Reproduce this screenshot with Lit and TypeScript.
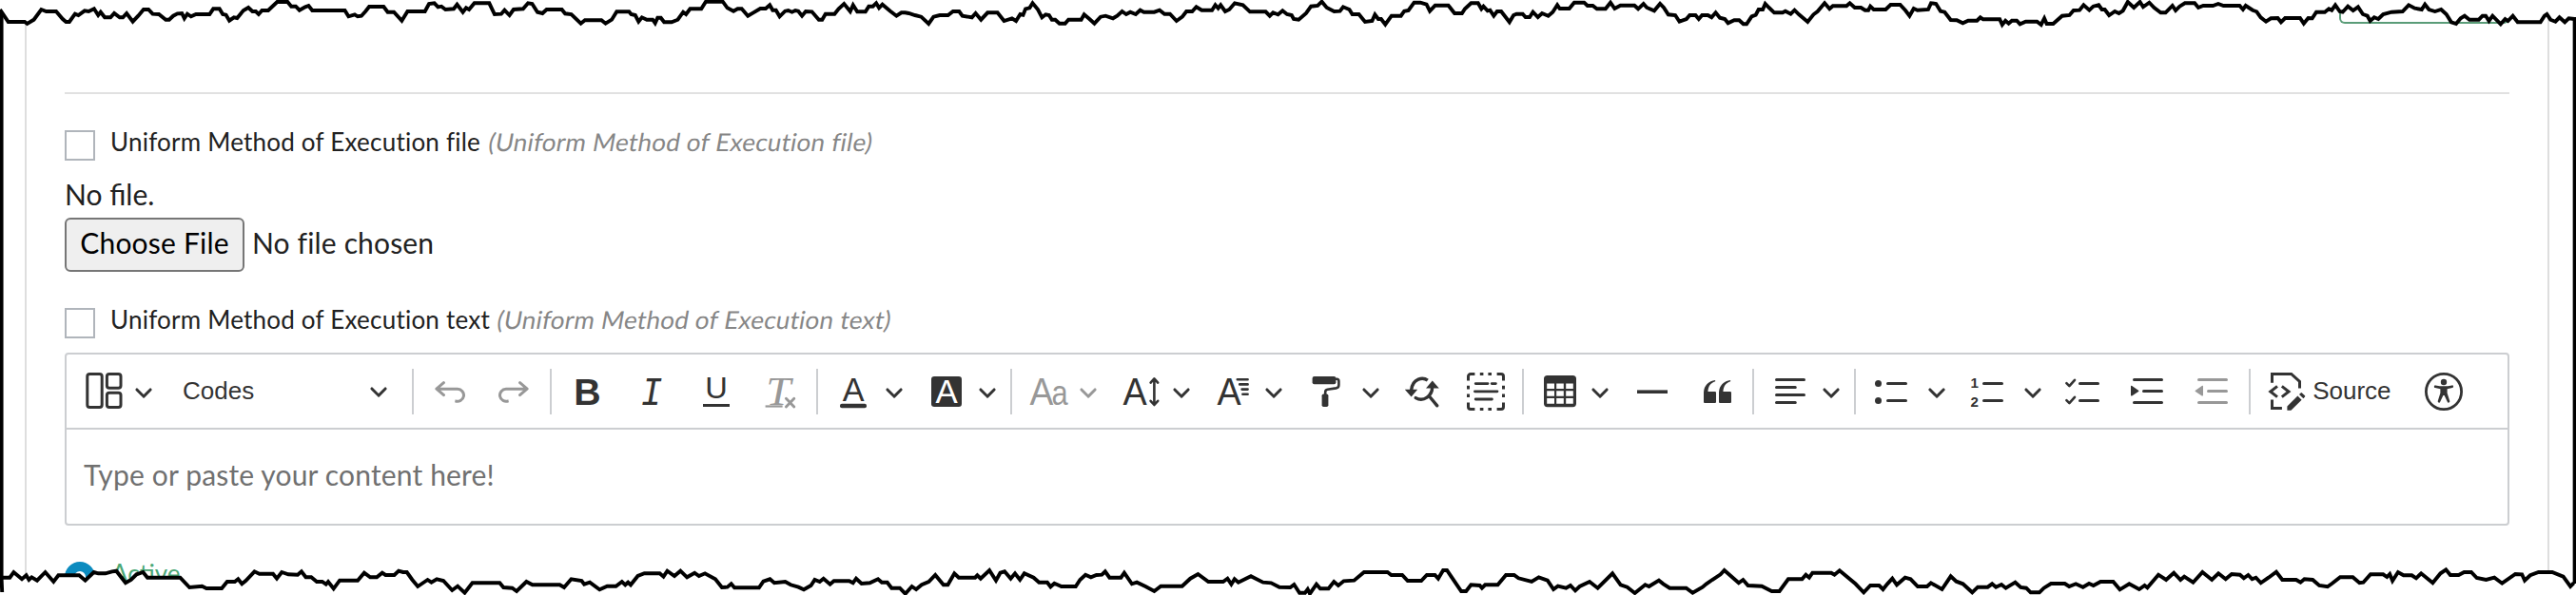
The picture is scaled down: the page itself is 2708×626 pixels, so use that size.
import { LitElement, html, css, svg, nothing, type TemplateResult } from "lit";
import { customElement, property } from "lit/decorators.js";
import { classMap } from "lit/directives/class-map.js";

// Icons are drawn on a 20x20 grid.
const icons: Record<string, TemplateResult> = {
  layout: svg`
    <g fill="none" stroke="currentColor" stroke-width="1.5">
      <rect x="1.4" y=".75" width="7.7" height="17.5" rx="1.3" />
      <rect x="11.7" y=".75" width="7.3" height="7.4" rx="1.3" />
      <rect x="11.7" y="10.6" width="7.3" height="7.65" rx="1.3" />
    </g>`,
  undo: svg`<path d="m5.042 9.367 2.189 1.837a.75.75 0 0 1-.965 1.149l-3.788-3.18a.747.747 0 0 1-.21-.284.75.75 0 0 1 .17-.945L6.23 4.762a.75.75 0 1 1 .964 1.15L4.863 7.866h8.917A.75.75 0 0 1 14 7.9a4 4 0 1 1-1.477 7.718l.344-1.489a2.5 2.5 0 1 0 1.094-4.73l.008-.032H5.042z" />`,
  redo: svg`<path d="m14.958 9.367-2.189 1.837a.75.75 0 0 0 .965 1.149l3.788-3.18a.747.747 0 0 0 .21-.284.75.75 0 0 0-.17-.945L13.77 4.762a.75.75 0 1 0-.964 1.15l2.331 1.955H6.22A.75.75 0 0 0 6 7.9a4 4 0 1 0 1.477 7.718l-.344-1.489A2.5 2.5 0 1 1 6.039 9.4l-.008-.032h8.927z" />`,
  bold: svg`<text class="sans bold" x="3.1" y="17" font-size="19.8" textLength="14.2" lengthAdjust="spacingAndGlyphs">B</text>`,
  italic: svg`<text class="mono oblique" x="4.2" y="17" font-size="21.4" textLength="11.4" lengthAdjust="spacingAndGlyphs">I</text>`,
  underline: svg`
    <text class="sans" x="4.1" y="13.7" font-size="15.4" textLength="11.8" lengthAdjust="spacingAndGlyphs">U</text>
    <rect x="3" y="16.5" width="14" height="1.5" />`,
  removeFormat: svg`
    <text class="serif oblique" x="2.6" y="16.8" font-size="21" textLength="13" lengthAdjust="spacingAndGlyphs">T</text>
    <rect x="2.3" y="17.2" width="9" height="1.1" />
    <path d="m13.2 13.6 4.2 4.4m0-4.4-4.2 4.4" fill="none" stroke="currentColor" stroke-width="1.4" stroke-linecap="round" />`,
  fontColor: svg`
    <text class="sans" x="4.4" y="15" font-size="17.2" textLength="11.4" lengthAdjust="spacingAndGlyphs">A</text>
    <rect x="3" y="16.4" width="14" height="2.2" rx="1" />`,
  fontBackground: svg`
    <rect x="2" y="2" width="16" height="16" rx="1.6" />
    <text class="sans inverse" x="4.2" y="16.2" font-size="17.4" textLength="11.6" lengthAdjust="spacingAndGlyphs">A</text>`,
  changeCase: svg`
    <text class="sans" x=".2" y="17" font-size="20" textLength="12.4" lengthAdjust="spacingAndGlyphs">A</text>
    <text class="sans" x="11.7" y="17" font-size="18.6" textLength="8.6" lengthAdjust="spacingAndGlyphs">a</text>`,
  fontSize: svg`
    <text class="sans" x=".8" y="17" font-size="20" textLength="12.6" lengthAdjust="spacingAndGlyphs">A</text>
    <path d="M17.2 3.4v13.4M15.3 5.3l1.9-2.1 1.9 2.1M15.3 14.9l1.9 2.1 1.9-2.1" fill="none" stroke="currentColor" stroke-width="1.3" stroke-linecap="round" stroke-linejoin="round" />`,
  fontFamily: svg`
    <text class="sans" x="1.8" y="17" font-size="20" textLength="12.6" lengthAdjust="spacingAndGlyphs">A</text>
    <path d="M12.4 3.6h5.4M13.6 6.2h4.2M14.8 8.8h3M15.2 11.4h2.6" fill="none" stroke="currentColor" stroke-width="1.3" stroke-linecap="round" />`,
  formatPainter: svg`
    <rect x="2.8" y="2" width="12.4" height="4.1" rx="1" />
    <path d="M15 3.4h.6a1.1 1.1 0 0 1 1.1 1.1v2a1.7 1.7 0 0 1-1.4 1.7l-4.5.7a1.4 1.4 0 0 0-1.2 1.4v1.5" fill="none" stroke="currentColor" stroke-width="1.3" />
    <rect x="7.8" y="11.2" width="3.4" height="6.8" rx=".9" />`,
  findReplace: svg`
    <g fill="none" stroke="currentColor" stroke-width="1.7">
      <path d="M12.9 4.1C10.6 2.4 5 2.7 4.3 9.3" />
      <path d="M15.3 7.4c.2 4.8-4.6 8.3-8.7 5.9" stroke-linecap="round" />
      <path d="m14.2 13 3.7 4.4" stroke-linecap="round" />
    </g>
    <path d="M.9 8.9h6.7l-3.3 3.9zM12 8.2l3.4-4 3.5 4z" />`,
  selectAll: svg`
    <path d="M.75 4.2V2a1.25 1.25 0 0 1 1.25-1.25h2.2M15.8.75H18A1.25 1.25 0 0 1 19.25 2v2.2M19.25 15.8V18A1.25 1.25 0 0 1 18 19.25h-2.2M4.2 19.25H2A1.25 1.25 0 0 1 .75 18v-2.2" fill="none" stroke="currentColor" stroke-width="1.5" />
    <path d="M6.9.75h1.8M11.2.75H13M6.9 19.25h1.8M11.2 19.25H13M.75 6.9v1.8M.75 11.2V13M19.25 6.9v1.8M19.25 11.2V13" fill="none" stroke="currentColor" stroke-width="1.5" />
    <path d="M4.6 5.8H11m2.1 0h2.1M4.2 9.9h11.8M4.6 14h8.6" fill="none" stroke="currentColor" stroke-width="1.4" stroke-linecap="round" />`,
  table: svg`<path fill-rule="evenodd" d="M3.3 1.5h13.4A1.8 1.8 0 0 1 18.5 3.3v13a1.8 1.8 0 0 1-1.8 1.8H3.3a1.8 1.8 0 0 1-1.8-1.8v-13a1.8 1.8 0 0 1 1.8-1.8zM3.1 5.8v2.7h3.9V5.8zm5 0v2.7h3.8V5.8zm5 0v2.7h3.8V5.8zM3.1 9.6v2.8h3.9V9.6zm5 0v2.8h3.8V9.6zm5 0v2.8h3.8V9.6zM3.1 13.5v2.9h3.9v-2.9zm5 0v2.9h3.8v-2.9zm5 0v2.9h3.8v-2.9z" />`,
  horizontalLine: svg`<rect x="2" y="9.2" width="16" height="1.8" />`,
  quote: svg`<path d="M3 10.423a6.5 6.5 0 0 1 6.056-6.408l.038.67C6.448 5.423 5.354 7.663 5.22 10H9c.552 0 .5.432.5.986v4.511c0 .554-.448.503-1 .503h-5c-.552 0-.5-.449-.5-1.003v-4.574zm8 0a6.5 6.5 0 0 1 6.056-6.408l.038.67c-2.646.739-3.74 2.979-3.873 5.315H17c.552 0 .5.432.5.986v4.511c0 .554-.448.503-1 .503h-5c-.552 0-.5-.449-.5-1.003v-4.574z" />`,
  alignLeft: svg`<path d="M2.75 3.75h14.5M2.75 7.75h9.9M2.75 11.75h14.5M2.75 15.75h9.9" fill="none" stroke="currentColor" stroke-width="1.5" stroke-linecap="round" />`,
  bulletedList: svg`
    <circle cx="2.75" cy="5.75" r="1.75" /><circle cx="2.75" cy="14.75" r="1.75" />
    <path d="M7.75 5.75h9.5M7.75 14.75h9.5" fill="none" stroke="currentColor" stroke-width="1.5" stroke-linecap="round" />`,
  numberedList: svg`
    <text class="sans bold" x=".7" y="8.2" font-size="7.6" textLength="4.2" lengthAdjust="spacingAndGlyphs">1</text>
    <text class="sans bold" x=".7" y="17.9" font-size="7.6" textLength="4.2" lengthAdjust="spacingAndGlyphs">2</text>
    <path d="M7.75 5.75h9.5M7.75 14.75h9.5" fill="none" stroke="currentColor" stroke-width="1.5" stroke-linecap="round" />`,
  todoList: svg`
    <path d="m.7 5.6 1.5 1.5L5 3.9M.7 14.6l1.5 1.5L5 12.9" fill="none" stroke="currentColor" stroke-width="1.3" stroke-linecap="round" stroke-linejoin="round" />
    <path d="M7.75 5.75h9.5M7.75 14.75h9.5" fill="none" stroke="currentColor" stroke-width="1.5" stroke-linecap="round" />`,
  indent: svg`
    <path d="M2.75 3.75h14.5M7.75 9.75h9.5M2.75 15.75h14.5" fill="none" stroke="currentColor" stroke-width="1.5" stroke-linecap="round" />
    <path d="M1.632 6.95 5.02 9.358a.4.4 0 0 1-.013.661l-3.39 2.207A.4.4 0 0 1 1 11.892V7.275a.4.4 0 0 1 .632-.326z" />`,
  outdent: svg`
    <path d="M2.75 3.75h14.5M7.75 9.75h9.5M2.75 15.75h14.5" fill="none" stroke="currentColor" stroke-width="1.5" stroke-linecap="round" />
    <path d="M4.368 6.95.98 9.358a.4.4 0 0 0 .013.661l3.39 2.207A.4.4 0 0 0 5 11.892V7.275a.4.4 0 0 0-.632-.326z" />`,
  source: svg`
    <g fill="none" stroke="currentColor" stroke-width="1.5">
      <path d="M1.75 5.4V.75h10.1l4.4 4v3.5M1.75 14.2v4.6h5.2" />
      <path d="M4.5 7.2.9 10l3.6 2.8M6.9 7.2l3.6 2.8-3.6 2.8" />
    </g>
    <path d="m9.7 17.7 5.5-5.4 2.1 2.1-5.6 5.5H9.7zM16 11.5l.8-.8a.5.5 0 0 1 .7 0l1.5 1.4a.5.5 0 0 1 0 .7l-.8.8z" />`,
  accessibility: svg`
    <circle cx="10" cy="10" r="9.3" fill="none" stroke="currentColor" stroke-width="1.4" />
    <circle cx="10" cy="5" r="1.6" />
    <path d="M5 7.1a.6.6 0 0 1 .7-.4c2.9.6 5.7.6 8.6 0a.6.6 0 0 1 .2 1.3l-2.7.6v2.2l1.3 4.1a.6.6 0 0 1-1.2.5L10.3 12h-.6l-1.6 3.4a.6.6 0 0 1-1.2-.5l1.3-4.1V8.6l-2.7-.6a.6.6 0 0 1-.5-.9z" />`,
};

type Kind = "button" | "dropdown" | "split" | "separator" | "heading" | "source";

interface Item {
  kind: Kind;
  icon?: string;
  label: string;
  text?: string;
  disabled?: boolean;
}

const sep: Item = { kind: "separator", label: "" };

const items: Item[] = [
  { kind: "dropdown", icon: "layout", label: "Insert layout" },
  { kind: "heading", label: "Heading", text: "Codes" },
  sep,
  { kind: "button", icon: "undo", label: "Undo", disabled: true },
  { kind: "button", icon: "redo", label: "Redo", disabled: true },
  sep,
  { kind: "button", icon: "bold", label: "Bold" },
  { kind: "button", icon: "italic", label: "Italic" },
  { kind: "button", icon: "underline", label: "Underline" },
  { kind: "button", icon: "removeFormat", label: "Remove format", disabled: true },
  sep,
  { kind: "dropdown", icon: "fontColor", label: "Font color" },
  { kind: "dropdown", icon: "fontBackground", label: "Font background color" },
  sep,
  { kind: "dropdown", icon: "changeCase", label: "Change case", disabled: true },
  { kind: "dropdown", icon: "fontSize", label: "Font size" },
  { kind: "dropdown", icon: "fontFamily", label: "Font family" },
  { kind: "split", icon: "formatPainter", label: "Format painter" },
  { kind: "button", icon: "findReplace", label: "Find and replace" },
  { kind: "button", icon: "selectAll", label: "Select all" },
  sep,
  { kind: "dropdown", icon: "table", label: "Insert table" },
  { kind: "button", icon: "horizontalLine", label: "Horizontal line" },
  { kind: "button", icon: "quote", label: "Block quote" },
  sep,
  { kind: "dropdown", icon: "alignLeft", label: "Text alignment" },
  sep,
  { kind: "split", icon: "bulletedList", label: "Bulleted list" },
  { kind: "split", icon: "numberedList", label: "Numbered list" },
  { kind: "button", icon: "todoList", label: "To-do list" },
  { kind: "button", icon: "indent", label: "Increase indent" },
  { kind: "button", icon: "outdent", label: "Decrease indent", disabled: true },
  sep,
  { kind: "source", icon: "source", label: "Source", text: "Source" },
  { kind: "button", icon: "accessibility", label: "Accessibility help" },
];

@customElement("editor-toolbar")
export class EditorToolbar extends LitElement {
  static override styles = css`
    :host {
      display: flex;
      align-items: center;
      gap: 7.6px;
      height: 79px;
      padding: 0 8.6px;
      box-sizing: border-box;
      border-bottom: 2px solid #ccced1;
      color: #333;
      font: 26px/28px "Liberation Sans", Arial, sans-serif;
    }
    .item {
      display: flex;
      align-items: center;
      flex: none;
      box-sizing: border-box;
      width: 60px;
      height: 60px;
      padding: 0 7px 0 10px;
      margin: 0;
      border: 0;
      background: none;
      color: inherit;
      font: inherit;
    }
    .dropdown {
      width: 89.8px;
      justify-content: space-between;
    }
    .split {
      width: 93.4px;
      justify-content: space-between;
      padding-right: 6.4px;
    }
    .heading {
      width: 249.4px;
      justify-content: space-between;
      padding: 0 17.5px 2px 16px;
    }
    .source {
      width: 157.8px;
      padding-left: 12px;
      gap: 6px;
    }
    .source span {
      padding-bottom: 2px;
    }
    .disabled {
      opacity: 0.5;
    }
    .separator {
      flex: none;
      width: 2px;
      height: 48px;
      background: #ccced1;
    }
    .icon {
      flex: none;
      width: 40px;
      height: 40px;
      fill: currentColor;
      overflow: visible;
    }
    .arrow {
      flex: none;
      width: 20px;
      height: 20px;
      fill: currentColor;
    }
    .sans {
      font-family: "Liberation Sans", Arial, sans-serif;
    }
    .serif {
      font-family: "Liberation Serif", serif;
    }
    .mono {
      font-family: "Liberation Mono", monospace;
    }
    .bold {
      font-weight: bold;
    }
    .oblique {
      font-style: italic;
    }
    .inverse {
      fill: #fff;
    }
  `;

  private _renderArrow() {
    return html`
      <svg class="arrow" viewBox="0 0 10 10">
        <path d="M.941 4.523a.75.75 0 1 1 1.06-1.06l3.006 3.005 3.005-3.005a.75.75 0 1 1 1.06 1.06l-3.549 3.55a.75.75 0 0 1-1.168-.136z" />
      </svg>
    `;
  }

  private _renderItem(item: Item) {
    if (item.kind === "separator") {
      return html`<span class="separator"></span>`;
    }
    const hasArrow = ["dropdown", "split", "heading"].includes(item.kind);
    return html`
      <button
        class=${classMap({ item: true, [item.kind]: true, disabled: !!item.disabled })}
        aria-label=${item.label}
        ?disabled=${item.disabled}
      >
        ${item.icon
          ? html`<svg class="icon" viewBox="0 0 20 20">${icons[item.icon]}</svg>`
          : nothing}
        ${item.text ? html`<span>${item.text}</span>` : nothing}
        ${hasArrow ? this._renderArrow() : nothing}
      </button>
    `;
  }

  override render() {
    return items.map((item) => this._renderItem(item));
  }
}

// One stretch of a torn edge: origin, horizontal scale, then x,y pairs.
interface Stretch {
  x: number;
  y: number;
  scale: number;
  points: string;
}

const topEdge: Stretch[] = [
  {
    x: 0, y: 0, scale: 2.306,
    points: "0,30 20,69 60,69 66,75 82,62 100,30 112,36 136,36 152,60 160,69 168,69 182,44 190,48 205,34 215,36 228,28 238,48 244,38 254,55 268,55 277,42 290,55 298,55 307,42 322,68 335,50 348,30 360,30 370,44 385,45 402,62 410,62 420,50 430,43 441,42 447,58 454,44 463,52 475,45 508,45 517,28 532,28 540,45 548,47 556,65 567,55 575,57 590,33 602,24 612,36 620,36 627,45 635,33 650,33 672,6 697,6 706,20 717,20 726,32 740,22 748,18 757,33 836,33 845,52 860,46 867,52 876,50 886,36 895,21 930,21 940,38 955,38 974,65 988,36 1030,36 1040,12 1053,10 1062,22 1070,20 1080,30 1100,28 1108,14 1122,38 1130,25 1137,30 1150,10 1186,10 1199,45 1215,44 1223,32 1235,48 1245,30 1268,28 1280,10 1290,12 1303,38 1315,42 1325,30 1362,30 1370,43 1385,45 1408,74 1418,64 1458,64 1468,74 1483,62 1495,37 1525,37 1530,45 1540,48 1548,68 1556,55",
  },
  {
    x: 680, y: 0, scale: 2.306,
    points: "0,62 14,62 20,73 26,56 34,56 42,70 60,70 75,62 88,38 95,45 105,28 132,28 143,5 184,5 195,25 210,35 220,28 230,28 245,50 258,40 275,27 288,27 298,16 305,32 313,32 322,52 335,35 343,33 352,38 360,33 367,35 376,50 385,36 400,37 417,62 425,62 433,44 455,44 465,28 478,12 493,36 500,16 510,37 530,37 538,20 548,20 556,10 563,25 571,14 590,35 605,50 617,40 626,40 635,42 650,48 665,53 683,75 695,53 710,48 730,48 742,36 757,36 765,50 788,55 797,42 810,62 826,40 850,40 866,66 885,58 895,66 905,45 912,47 918,28 928,25 935,10 948,30 958,55 967,46 975,48 982,62 990,62 1000,74 1014,74 1022,62 1053,62 1060,46 1073,60 1085,74 1100,53 1112,50 1130,58 1140,50 1152,36 1162,45 1172,38 1185,45 1196,32 1205,38 1230,38 1243,32 1255,44 1268,44 1284,66 1298,53 1308,36 1322,36 1332,22 1345,32 1370,32 1378,16 1385,26 1391,16 1402,36 1412,30 1425,10 1445,16 1462,37 1500,37 1510,50 1518,40 1530,46 1541,34 1552,45 1563,48",
  },
  {
    x: 1360, y: 0, scale: 2.306,
    points: "0,60 12,62 30,42 42,20 58,18 68,5 80,24 98,36 112,35 120,22 135,30 142,45 158,45 173,69 190,66 197,46 205,60 212,60 222,77 237,50 260,50 268,35 278,33 292,8 307,8 322,14 330,35 343,17 375,17 390,42 408,42 415,28 430,10 447,10 455,28 460,20 470,34 476,32 485,50 493,36 503,36 523,70 533,48 540,44 555,44 562,54 572,54 580,38 592,54 602,42 617,50 628,38 639,16 645,27 668,27 680,8 704,8 712,18 725,18 735,28 756,28 768,8 778,27 792,17 826,17 835,28 848,12 856,24 874,34 888,12 897,24 908,46 925,48 935,68 952,60 960,48 974,48 982,60 990,48 1004,48 1013,55 1023,40 1033,56 1045,60 1053,73 1068,64 1080,64 1090,76 1098,76 1110,52 1120,47 1127,30 1137,30 1143,12 1152,24 1165,40 1185,40 1192,35 1205,44 1214,32 1225,46 1246,69 1260,46 1270,36 1287,10 1299,28 1307,19 1340,19 1348,10 1360,24 1375,24 1385,32 1393,32 1398,20 1406,30 1435,30 1447,15 1470,15 1483,33 1493,50 1503,27 1512,32 1538,30 1545,10 1557,12",
  },
  {
    x: 2040, y: 0, scale: 2.347,
    points: "0,35 10,38 25,63 40,64 55,73 68,65 90,65 98,55 105,61 146,61 152,78 160,65 168,74 176,65 188,65 196,76 210,68 238,68 248,78 256,58 262,75 278,75 300,50 318,48 328,33 343,32 353,16 367,32 377,20 390,16 398,30 405,30 416,48 430,36 440,42 450,34 462,6 477,24 492,6 500,22 515,8 527,24 543,40 555,40 572,18 580,33 590,20 603,10 627,10 636,24 648,18 672,18 685,12 698,18 738,18 746,30 753,18 770,32 780,37 790,55 803,68 815,58 832,57 840,70 850,57 887,57 896,74 907,57 917,58 927,38 948,38 958,28 965,32 974,16 985,36 992,38 1005,20 1018,33 1030,22 1042,45 1053,50 1060,66 1070,55 1080,60 1092,45 1113,38 1140,36 1155,16 1170,26 1187,30 1195,14 1205,30 1220,36 1235,30 1248,45 1260,70 1272,75 1283,58 1293,50 1305,62 1328,62 1337,50 1345,50 1353,66 1362,50 1382,76 1393,60 1400,66 1412,50 1424,70 1480,70 1490,50 1496,45 1505,62 1517,68 1527,55 1540,70 1550,58 1564,60",
  },
];

const bottomEdge: Stretch[] = [
  {
    x: 0, y: 566, scale: 1.742,
    points: "3,125 18,125 25,108 40,130 48,118 53,132 58,124 68,134 83,108 98,138 107,118 145,118 156,134 172,108 180,112 193,112 205,106 213,104 230,142 240,132 250,115 262,108 270,125 330,125 347,156 370,152 378,159 406,159 416,138 430,138 436,130 443,145 450,135 466,106 475,113 500,113 507,128 516,108 528,115 545,116 552,106 560,124 570,124 580,138 590,138 597,146 601,138 611,160 622,134 655,134 667,110 678,124 690,124 700,110 706,117 722,117 730,104 738,108 745,108 755,132 765,153 783,132 790,140 800,130 812,135 828,165 838,152 851,173 865,142 915,142 922,156 938,158 946,168 964,138 975,148 1025,148 1033,156 1046,130 1065,135 1070,146 1080,140 1098,163 1112,152 1128,152 1139,138 1145,148 1150,140 1155,148 1168,120 1180,112 1208,112 1215,122 1222,104 1235,120 1246,104 1258,124 1272,110 1280,120 1291,112 1310,130 1322,156 1332,155 1339,145 1345,157 1390,157 1398,137 1410,130 1418,142 1438,138 1448,148 1462,155 1472,163 1485,150 1492,132 1501,138 1508,128 1520,146 1527,136 1555,136 1562,142",
  },
  {
    x: 900, y: 566, scale: 1.742,
    points: "0,128 10,144 25,142 40,130 47,140 57,140 65,158 80,158 90,176 102,153 110,162 120,148 133,138 145,117 160,148 168,148 180,112 188,125 218,125 222,118 228,128 244,102 256,134 264,110 272,106 283,128 291,112 300,132 308,112 325,125 335,140 350,140 356,154 363,143 376,153 402,153 410,132 420,116 430,124 440,117 450,116 456,106 464,125 485,125 491,110 505,145 514,140 530,153 546,168 558,152 597,152 612,128 626,114 645,138 672,138 680,128 687,146 693,130 700,140 723,121 745,140 760,142 775,155 795,156 802,147 812,173 822,173 827,162 831,176 843,146 850,160 865,160 875,138 883,150 893,136 912,134 930,108 973,108 980,117 1000,117 1010,135 1035,135 1045,117 1060,117 1066,128 1075,102 1082,102 1108,168 1117,168 1126,148 1142,150 1146,158 1152,148 1175,148 1190,117 1205,117 1213,127 1237,138 1250,124 1266,134 1277,162 1285,152 1300,158 1308,150 1317,166 1325,153 1343,138 1358,158 1385,112 1400,148 1412,155 1426,174 1445,148 1452,153 1470,134 1478,145 1490,158 1520,158 1532,173 1550,155 1557,145",
  },
  {
    x: 1800, y: 536, scale: 1.727,
    points: "0,222 15,205 22,192 48,232 56,222 65,240 90,242 108,258 122,258 138,220 163,220 170,206 176,215 182,200 216,200 222,206 231,193 260,235 275,262 287,240 303,240 310,252 318,235 327,218 335,238 350,215 360,220 373,243 390,243 397,232 417,252 433,211 443,227 455,235 472,262 482,245 500,245 508,235 515,245 525,237 533,248 550,230 560,246 570,248 578,262 594,262 602,248 615,234 640,234 648,243 660,235 673,245 684,234 692,240 705,228 728,228 740,253 757,235 775,252 785,240 790,247 810,206 824,222 838,200 850,222 857,212 873,230 890,198 907,222 919,202 932,220 943,204 958,206 965,217 973,207 980,220 987,215 996,232 1010,215 1024,197 1035,222 1060,222 1068,230 1075,220 1090,222 1102,240 1117,244 1125,234 1140,214 1163,214 1175,232 1182,230 1195,205 1218,205 1225,213 1230,204 1235,225 1245,198 1255,208 1270,208 1278,217 1287,202 1308,232 1322,202 1332,190 1340,207 1355,207 1365,198 1378,198 1388,216 1405,222 1420,215 1434,233 1458,204 1470,205 1475,224 1485,208 1500,198 1525,198 1545,212 1558,243 1564,232",
  },
];

function toPoints(stretches: Stretch[]): string[] {
  return stretches.flatMap((s) =>
    s.points.split(" ").map((pair) => {
      const [px, py] = pair.split(",").map(Number);
      return `${(s.x + px / s.scale).toFixed(1)},${(s.y + py / 3).toFixed(1)}`;
    })
  );
}

@customElement("torn-frame")
export class TornFrame extends LitElement {
  static override styles = css`
    :host {
      position: absolute;
      inset: 0;
      pointer-events: none;
    }
    svg {
      display: block;
    }
    .outside {
      fill: #fff;
    }
    .edge {
      fill: none;
      stroke: #000;
      stroke-width: 3.9;
      stroke-linejoin: miter;
      stroke-miterlimit: 3;
    }
  `;

  override render() {
    const top = toPoints(topEdge);
    const bottom = toPoints(bottomEdge);
    return html`
      <svg width="2708" height="626" viewBox="0 0 2708 626">
        <polygon class="outside" points="0,0 ${top.join(" ")} 2708,20 2708,0" />
        <polygon class="outside" points="0,626 0,607 ${bottom.join(" ")} 2708,613 2708,626" />
        <polyline class="edge" points=${top.join(" ")} />
        <polyline class="edge" points=${bottom.join(" ")} />
        <path class="edge" d="M1.6 13v596l.6 14M2706.6 18v596" />
      </svg>
    `;
  }
}

@customElement("option-row")
export class OptionRow extends LitElement {
  static override styles = css`
    :host {
      display: flex;
      gap: 16px;
      height: 36px;
      font-size: 26px;
      line-height: 32px;
    }
    .box {
      flex: none;
      align-self: flex-end;
      box-sizing: border-box;
      width: 32px;
      height: 32px;
      border: 2px solid #b0b5bb;
      background: #fff;
    }
    .label {
      letter-spacing: 0.22px;
      white-space: nowrap;
    }
    .hint {
      display: inline-block;
      margin-left: 8.5px;
      color: #868686;
      letter-spacing: 0.24px;
      transform: skewX(-10deg);
    }
  `;

  @property({ type: String }) label = "";

  override render() {
    return html`
      <span class="box"></span>
      <span class="label">${this.label}<span class="hint">(${this.label})</span></span>
    `;
  }
}

@customElement("app-root")
export class AppRoot extends LitElement {
  static override styles = css`
    :host {
      display: block;
      position: relative;
      height: 626px;
      overflow: hidden;
      background: #fff;
      color: #212121;
      font: 30px/36px Lato, "Open Sans", sans-serif;
    }
    .panel {
      display: flex;
      flex-direction: column;
      box-sizing: border-box;
      height: 626px;
      margin: 0 28px 0 26px;
      padding: 0 40px;
      border: solid #dedede;
      border-width: 0 2px;
    }
    .action {
      align-self: flex-end;
      flex: none;
      box-sizing: border-box;
      width: 179px;
      height: 25px;
      border: 2px solid #5a9c78;
      border-top: 0;
      border-radius: 0 0 6px 6px;
    }
    .rule {
      flex: none;
      height: 2px;
      margin: 72px 0 34px;
      background: #e1e1e1;
    }
    .status {
      margin-top: 17px;
    }
    .file {
      display: flex;
      align-items: flex-start;
      gap: 8px;
      margin: 7px 0 34px;
    }
    .choose {
      box-sizing: border-box;
      width: 189px;
      height: 57px;
      padding: 6px 0 0;
      border: 2px solid #767676;
      border-radius: 6px;
      background: #efefef;
      color: #000;
      text-align: center;
      letter-spacing: 0.2px;
    }
    .chosen {
      padding-top: 8px;
      letter-spacing: 0.15px;
    }
    .editor {
      flex: none;
      box-sizing: border-box;
      height: 182px;
      margin-top: 15px;
      border: 2px solid #ccced1;
      border-radius: 4px;
    }
    .content {
      padding: 29px 18px;
      color: #707070;
      letter-spacing: 0.16px;
    }
    .active {
      display: flex;
      gap: 17px;
      margin-top: 34px;
      color: #4ca877;
      font-size: 26px;
      line-height: 32px;
    }
    .radio {
      box-sizing: border-box;
      width: 32px;
      height: 32px;
      margin-top: 4px;
      border: 10px solid #0b8bbf;
      border-radius: 50%;
    }
  `;

  override render() {
    return html`
      <div class="panel">
        <div class="action"></div>
        <div class="rule"></div>
        <option-row label="Uniform Method of Execution file"></option-row>
        <div class="status">No file.</div>
        <div class="file">
          <div class="choose">Choose File</div>
          <span class="chosen">No file chosen</span>
        </div>
        <option-row label="Uniform Method of Execution text"></option-row>
        <div class="editor">
          <editor-toolbar></editor-toolbar>
          <div class="content">Type or paste your content here!</div>
        </div>
        <div class="active">
          <span class="radio"></span>
          <span>Active</span>
        </div>
      </div>
      <torn-frame></torn-frame>
    `;
  }
}

declare global {
  interface HTMLElementTagNameMap {
    "app-root": AppRoot;
    "editor-toolbar": EditorToolbar;
    "option-row": OptionRow;
    "torn-frame": TornFrame;
  }
}
